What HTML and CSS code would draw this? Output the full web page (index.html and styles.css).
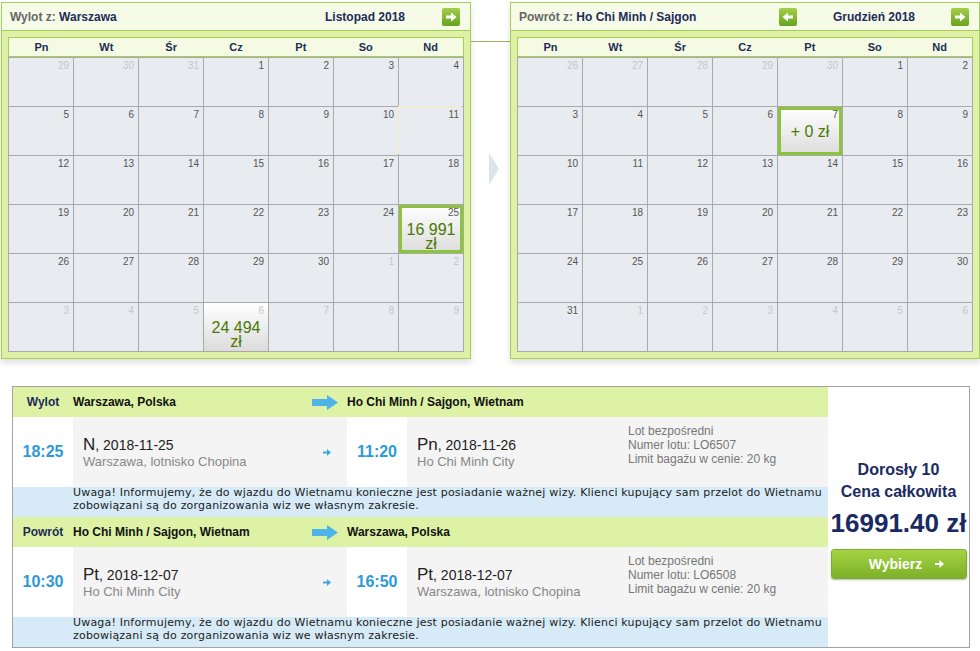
FILE: index.html
```html
<!DOCTYPE html>
<html lang="pl">
<head>
    <meta charset="UTF-8">
    <title>Wybór lotu</title>
    <link rel="stylesheet" href="styles.css">
</head>
<body>

    <!-- Calendars: outbound and return -->
    <div class="calendars">
        <div class="cal">
            <div class="cal-head">
                <span class="cal-title"><span class="muted">Wylot z:</span> Warszawa</span>
                <div class="cal-nav">
                    <span class="nav-btn off"></span>
                    <span class="cal-month">Listopad 2018</span>
                    <span class="nav-btn"><svg width="12" height="10" viewBox="0 0 12 10"><path d="M1 3.5h5V0.5l5.5 4.5L6 9.5v-3H1z" fill="#fff"/></svg></span>
                </div>
            </div>
            <div class="cal-body">
                <div class="weekdays"><span>Pn</span><span>Wt</span><span>Śr</span><span>Cz</span><span>Pt</span><span>So</span><span>Nd</span></div>
                <div class="days">
                    <div class="day other">29</div><div class="day other">30</div><div class="day other">31</div><div class="day">1</div><div class="day">2</div><div class="day">3</div><div class="day">4</div>
                    <div class="day">5</div><div class="day">6</div><div class="day">7</div><div class="day">8</div><div class="day">9</div><div class="day">10</div><div class="day today">11</div>
                    <div class="day">12</div><div class="day">13</div><div class="day">14</div><div class="day">15</div><div class="day">16</div><div class="day">17</div><div class="day">18</div>
                    <div class="day">19</div><div class="day">20</div><div class="day">21</div><div class="day">22</div><div class="day">23</div><div class="day">24</div>
                    <div class="day fare picked">25<span class="fare-price">16 991 zł</span></div>
                    <div class="day">26</div><div class="day">27</div><div class="day">28</div><div class="day">29</div><div class="day">30</div><div class="day other">1</div><div class="day other">2</div>
                    <div class="day other">3</div><div class="day other">4</div><div class="day other">5</div>
                    <div class="day other fare">6<span class="fare-price">24 494 zł</span></div>
                    <div class="day other">7</div><div class="day other">8</div><div class="day other">9</div>
                </div>
            </div>
        </div>

        <div class="cal-link">
            <div class="line"></div>
            <div class="pointer"></div>
        </div>

        <div class="cal">
            <div class="cal-head">
                <span class="cal-title"><span class="muted">Powrót z:</span> Ho Chi Minh / Sajgon</span>
                <div class="cal-nav">
                    <span class="nav-btn"><svg width="12" height="10" viewBox="0 0 12 10"><path d="M11 3.5H6V0.5L0.5 5 6 9.5v-3h5z" fill="#fff"/></svg></span>
                    <span class="cal-month">Grudzień 2018</span>
                    <span class="nav-btn"><svg width="12" height="10" viewBox="0 0 12 10"><path d="M1 3.5h5V0.5l5.5 4.5L6 9.5v-3H1z" fill="#fff"/></svg></span>
                </div>
            </div>
            <div class="cal-body">
                <div class="weekdays"><span>Pn</span><span>Wt</span><span>Śr</span><span>Cz</span><span>Pt</span><span>So</span><span>Nd</span></div>
                <div class="days">
                    <div class="day other">26</div><div class="day other">27</div><div class="day other">28</div><div class="day other">29</div><div class="day other">30</div><div class="day">1</div><div class="day">2</div>
                    <div class="day">3</div><div class="day">4</div><div class="day">5</div><div class="day">6</div>
                    <div class="day fare picked">7<span class="fare-price">+ 0 zł</span></div>
                    <div class="day">8</div><div class="day">9</div>
                    <div class="day">10</div><div class="day">11</div><div class="day">12</div><div class="day">13</div><div class="day">14</div><div class="day">15</div><div class="day">16</div>
                    <div class="day">17</div><div class="day">18</div><div class="day">19</div><div class="day">20</div><div class="day">21</div><div class="day">22</div><div class="day">23</div>
                    <div class="day">24</div><div class="day">25</div><div class="day">26</div><div class="day">27</div><div class="day">28</div><div class="day">29</div><div class="day">30</div>
                    <div class="day">31</div><div class="day other">1</div><div class="day other">2</div><div class="day other">3</div><div class="day other">4</div><div class="day other">5</div><div class="day other">6</div>
                </div>
            </div>
        </div>
    </div>

    <!-- Offer summary -->
    <div class="offer">
        <div class="legs">

            <div class="leg-head">
                <span class="dir">Wylot</span>
                <span class="from">Warszawa, Polska
                    <svg width="26" height="15" viewBox="0 0 26 15"><path d="M0 4h15V0l11 7.5L15 15v-4H0z" fill="#4db4ea"/></svg>
                </span>
                <span>Ho Chi Minh / Sajgon, Wietnam</span>
            </div>
            <div class="leg-main">
                <div class="time">18:25</div>
                <div class="place">
                    <div>
                        <div class="date"><span class="wd">N</span>, 2018-11-25</div>
                        <div class="city">Warszawa, lotnisko Chopina</div>
                    </div>
                    <svg width="8" height="7" viewBox="0 0 8 7"><path d="M0 2.5h4V0l4 3.5L4 7V4.5H0z" fill="#3ea8e2"/></svg>
                </div>
                <div class="time">11:20</div>
                <div class="place">
                    <div>
                        <div class="date"><span class="wd">Pn</span>, 2018-11-26</div>
                        <div class="city">Ho Chi Minh City</div>
                    </div>
                </div>
                <div class="info">Lot bezpośredni<br>Numer lotu: LO6507<br>Limit bagażu w cenie: 20 kg</div>
            </div>
            <div class="note">Uwaga! Informujemy, że do wjazdu do Wietnamu konieczne jest posiadanie ważnej wizy. Klienci kupujący sam przelot do Wietnamu zobowiązani są do zorganizowania wiz we własnym zakresie.</div>

            <div class="leg-head">
                <span class="dir">Powrót</span>
                <span class="from">Ho Chi Minh / Sajgon, Wietnam
                    <svg width="26" height="15" viewBox="0 0 26 15"><path d="M0 4h15V0l11 7.5L15 15v-4H0z" fill="#4db4ea"/></svg>
                </span>
                <span>Warszawa, Polska</span>
            </div>
            <div class="leg-main">
                <div class="time">10:30</div>
                <div class="place">
                    <div>
                        <div class="date"><span class="wd">Pt</span>, 2018-12-07</div>
                        <div class="city">Ho Chi Minh City</div>
                    </div>
                    <svg width="8" height="7" viewBox="0 0 8 7"><path d="M0 2.5h4V0l4 3.5L4 7V4.5H0z" fill="#3ea8e2"/></svg>
                </div>
                <div class="time">16:50</div>
                <div class="place">
                    <div>
                        <div class="date"><span class="wd">Pt</span>, 2018-12-07</div>
                        <div class="city">Warszawa, lotnisko Chopina</div>
                    </div>
                </div>
                <div class="info">Lot bezpośredni<br>Numer lotu: LO6508<br>Limit bagażu w cenie: 20 kg</div>
            </div>
            <div class="note">Uwaga! Informujemy, że do wjazdu do Wietnamu konieczne jest posiadanie ważnej wizy. Klienci kupujący sam przelot do Wietnamu zobowiązani są do zorganizowania wiz we własnym zakresie.</div>

        </div>

        <div class="total">
            <span class="pax">Dorosły 10</span>
            <span class="pax">Cena całkowita</span>
            <span class="amount">16991.40 zł</span>
            <button type="button" class="pick-btn">Wybierz
                <svg width="9" height="8" viewBox="0 0 9 8"><path d="M0 3h4.5V0L9 4 4.5 8V5H0z" fill="#fff"/></svg>
            </button>
        </div>
    </div>

</body>
</html>
```

FILE: styles.css
```css
/* Page */
body {
    margin: 0;
    padding: 2px 0 0 1px;
    background: #fff;
    color: #222;
    font-family: "Liberation Sans", Arial, sans-serif;
}

/* Calendars row */
.calendars {
    display: flex;
    align-items: flex-start;
}

.cal {
    width: 468px;
    border: 1px solid #a4cf57;
    background: #def1a6;
    box-shadow: 0 4px 6px rgba(0, 0, 0, 0.12);
}

.cal-head {
    display: flex;
    align-items: center;
    height: 27px;
    padding: 0 10px 0 8px;
    background: #f6fbe8;
    border-bottom: 1px solid #a4cf57;
}

.cal-title {
    flex: 1;
    font-size: 12px;
    font-weight: bold;
    color: #1e2b58;
}

.cal-title .muted {
    color: #666;
}

.cal-nav {
    display: flex;
    align-items: center;
}

.nav-btn {
    width: 18px;
    height: 18px;
    border-radius: 2px;
    background: linear-gradient(#a2cf48, #68a31f);
    display: flex;
    align-items: center;
    justify-content: center;
}

.nav-btn.off {
    visibility: hidden;
}

.cal-month {
    width: 154px;
    text-align: center;
    font-size: 12px;
    font-weight: bold;
    color: #1e2b58;
}

.cal-body {
    padding: 6px;
}

.weekdays {
    display: grid;
    grid-template-columns: repeat(7, 1fr);
    height: 18px;
    border: 1px solid #a4cf57;
    background: #f5fbe2;
}

.weekdays span {
    text-align: center;
    font-size: 11px;
    font-weight: bold;
    line-height: 18px;
    color: #1e2b58;
}

.days {
    display: grid;
    grid-template-columns: repeat(7, 64px);
    grid-auto-rows: 48px;
    gap: 1px;
    padding: 1px;
    background: #a9a9a9;
}

.day {
    padding: 2px 4px 0;
    background: #e8ecf0;
    text-align: right;
    font-size: 10px;
    line-height: 12px;
    color: #555;
}

.day.other {
    color: #c3c6ca;
}

.day.today {
    box-shadow: -1px -1px 0 #f7eeb5;
}

.day.fare {
    background: linear-gradient(#fff, #dcdcdc);
}

.day.picked {
    box-shadow: inset 0 0 0 3px #8cc43c;
}

.fare-price {
    display: block;
    margin-top: 4px;
    text-align: center;
    font-size: 16px;
    line-height: 14px;
    color: #4a7a04;
}

/* Connector between the two calendars */
.cal-link {
    width: 40px;
    display: flex;
    flex-direction: column;
}

.cal-link .line {
    margin-top: 39px;
    height: 1px;
    background: #8fb35e;
}

.cal-link .pointer {
    margin: 111px 0 0 18px;
    width: 0;
    height: 0;
    border-left: 10px solid #dfe4e9;
    border-top: 16px solid transparent;
    border-bottom: 16px solid transparent;
}

/* Offer box */
.offer {
    display: flex;
    width: 956px;
    margin: 27px 0 0 11px;
    border: 1px solid #a3a3a3;
}

.legs {
    width: 815px;
}

.leg-head {
    display: grid;
    grid-template-columns: 60px 274px 1fr;
    align-items: center;
    height: 30px;
    background: #ddf2a5;
    font-size: 12px;
    font-weight: bold;
    color: #111;
}

.leg-head .dir {
    text-align: center;
    color: #1e2b58;
}

.leg-head .from {
    display: flex;
    align-items: center;
    justify-content: space-between;
    padding-right: 9px;
}

.leg-main {
    display: grid;
    grid-template-columns: 60px 274px 60px 213px 208px;
    height: 70px;
}

.time {
    display: flex;
    align-items: center;
    justify-content: center;
    background: #fff;
    font-size: 16px;
    font-weight: bold;
    color: #2d9ad8;
}

.place {
    display: flex;
    align-items: center;
    justify-content: space-between;
    padding: 0 16px 0 10px;
    background: #f4f4f4;
}

.date {
    font-size: 14px;
    line-height: 18px;
    color: #222;
}

.date .wd {
    font-size: 17px;
}

.city {
    font-size: 13px;
    line-height: 15px;
    color: #888;
}

.info {
    padding: 7px 0 0 8px;
    background: #f4f4f4;
    font-size: 12px;
    line-height: 14px;
    color: #777;
}

.note {
    height: 30px;
    padding-left: 60px;
    background: #d6ebf7;
    font-family: "DejaVu Sans", Verdana, sans-serif;
    font-size: 11px;
    line-height: 12.5px;
    letter-spacing: 0.19px;
    color: #222;
}

/* Price panel */
.total {
    flex: 1;
    display: flex;
    flex-direction: column;
    align-items: center;
    justify-content: center;
    padding-top: 4px;
    background: #fff;
    color: #1a2a62;
    font-weight: bold;
}

.total .pax {
    font-size: 16px;
    line-height: 22px;
}

.total .amount {
    font-size: 26px;
    line-height: 40px;
}

.pick-btn {
    display: flex;
    align-items: center;
    justify-content: center;
    gap: 13px;
    width: 136px;
    height: 30px;
    margin-top: 6px;
    padding: 0 0 0 16px;
    border: 1px solid #7fae2e;
    border-radius: 3px;
    background: linear-gradient(#a5d243, #7cb128);
    box-shadow: 0 1px 2px rgba(0, 0, 0, 0.3);
    color: #fff;
    font-family: "Liberation Sans", Arial, sans-serif;
    font-size: 14px;
    font-weight: bold;
    cursor: pointer;
}
```
